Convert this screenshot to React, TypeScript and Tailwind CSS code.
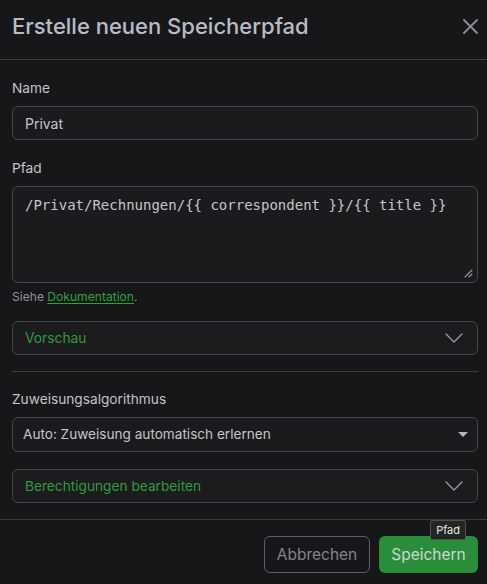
import React from "react";

function Chevron() {
  return (
    <svg width="18" height="10" viewBox="0 0 18 10" fill="none" className="text-[#9a9ca2]">
      <path d="M1 1l8 8 8-8" stroke="currentColor" strokeWidth="1.3" strokeLinecap="round" strokeLinejoin="round" />
    </svg>
  );
}

export default function App() {
  return (
    <div
      className="w-[487px] h-[584px] bg-[#17171a] flex flex-col overflow-hidden"
      style={{ fontFamily: "Inter, 'Liberation Sans', sans-serif" }}
    >
      {/* header */}
      <div className="h-[60px] shrink-0 flex items-center justify-between pl-3 pr-[8px] border-b border-[#3b3c40]">
        <h1 className="text-[22px] font-medium text-[#b7bcc6] -mt-[6px]">Erstelle neuen Speicherpfad</h1>
        <button className="w-[18px] h-[18px] flex items-center justify-center -mt-[7px] text-[#8d8e92]">
          <svg width="15" height="15" viewBox="0 0 15 15">
            <path d="M1 1l13 13M14 1L1 14" stroke="currentColor" strokeWidth="1.8" strokeLinecap="round" />
          </svg>
        </button>
      </div>

      {/* body */}
      <div className="flex-1 flex flex-col pl-3 pr-[9px] pt-[18px]">
        <label className="text-[13.7px] leading-5 text-[#c2c4c9]">Name</label>
        <div className="mt-2 h-[34px] rounded-[6px] border border-[#45464b] bg-[#1b1b1e] flex items-center px-3 text-[14px] text-[#c4c6cb]">
          Privat
        </div>

        <label className="mt-[18px] text-[13.7px] leading-5 text-[#c2c4c9]">Pfad</label>
        <div className="relative mt-2 h-[97px] rounded-[6px] border border-[#45464b] bg-[#1b1b1e] px-3 pt-[5px]">
          <span
            className="text-[14px] text-[#c4c6cb]"
            style={{ fontFamily: "'DejaVu Sans Mono', monospace" }}
          >
            {"/Privat/Rechnungen/{{ correspondent }}/{{ title }}"}
          </span>
          <svg className="absolute right-[4px] bottom-[4px]" width="10" height="10" viewBox="0 0 10 10">
            <path d="M2 9L9 2M6 9L9 6" stroke="#9a9ca2" strokeWidth="1.1" strokeLinecap="round" />
          </svg>
        </div>
        <div className="mt-[4px] text-[12.1px] leading-5 text-[#8f9196]">
          Siehe <span className="text-[#2ea043] underline underline-offset-2">Dokumentation</span>.
        </div>

        <div className="mt-[14px] h-[34px] rounded-[6px] border border-[#45464b] bg-[#1c1c1f] flex items-center justify-between pl-3 pr-[14px]">
          <span className="text-[13.8px] text-[#2e9b3e]">Vorschau</span>
          <Chevron />
        </div>

        <div className="mt-[16px] border-t border-[#3b3c40]" />

        <label className="mt-[17px] text-[13.7px] leading-5 text-[#c2c4c9]">Zuweisungsalgorithmus</label>
        <div className="mt-2 h-[35px] rounded-[6px] border border-[#45464b] bg-[#1b1b1e] flex items-center justify-between pl-[10px] pr-[9px]">
          <span className="text-[13.6px] text-[#c4c6cb]">Auto: Zuweisung automatisch erlernen</span>
          <svg width="10" height="5" viewBox="0 0 10 5">
            <path d="M0 0h10L5 5z" fill="#b4b6bb" />
          </svg>
        </div>

        <div className="mt-[17px] h-[34px] rounded-[6px] border border-[#45464b] bg-[#1c1c1f] flex items-center justify-between pl-3 pr-[14px]">
          <span className="text-[13.7px] text-[#2e9b3e]">Berechtigungen bearbeiten</span>
          <Chevron />
        </div>
      </div>

      {/* footer */}
      <div className="relative h-[65px] shrink-0 border-t border-[#3b3c40] flex items-start justify-end gap-[9px] pr-[9px] pt-[16px]">
        <button className="h-[37px] w-[106px] rounded-[6px] border border-[#5b6068] text-[15.5px] text-[#80858d]">
          Abbrechen
        </button>
        <button className="h-[37px] w-[99px] rounded-[6px] bg-[#298e3a] text-[15.5px] text-[#cfd6d0]">
          Speichern
        </button>
        <div className="absolute right-[21px] top-0 h-[20px] px-[5px] rounded-[2px] bg-[#232723] border border-[#4b514b] flex items-center text-[11px] text-[#e4e6e4]">
          Pfad
        </div>
      </div>
    </div>
  );
}
